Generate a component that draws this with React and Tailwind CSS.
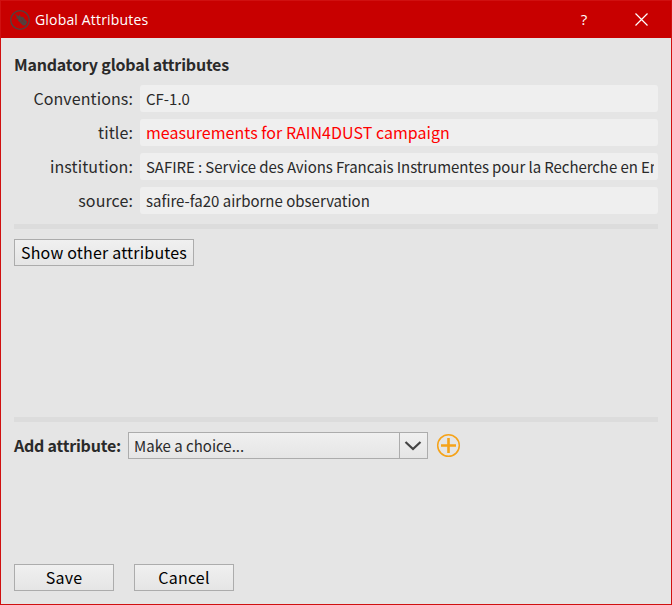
const fields = [
  { label: 'Conventions:', value: 'CF-1.0', style: 'text-[15px] text-[#2a2a2a]' },
  { label: 'title:', value: 'measurements for RAIN4DUST campaign', style: 'text-[16px] tracking-[0.03px] text-[#ff0000]' },
  {
    label: 'institution:',
    value: 'SAFIRE : Service des Avions Francais Instrumentes pour la Recherche en En',
    style: 'text-[15px] tracking-[-0.07px] text-[#2a2a2a]',
  },
  { label: 'source:', value: 'safire-fa20 airborne observation', style: 'text-[15px] text-[#2a2a2a]' },
];

const buttonStyle =
  'flex h-[27px] items-center justify-center whitespace-nowrap border border-[#acacac] bg-linear-to-b from-[#f0f0f0] to-[#e5e5e5] text-[16px] tracking-[0.2px] leading-[25px] text-black';

function AppIcon() {
  return (
    <svg width="22" height="22" viewBox="0 0 22 22" fill="none">
      <circle cx="11" cy="11" r="9.3" stroke="#50423f" strokeWidth="1.3" />
      <path d="M5.5 4.5 9.6 7.2l1.2-1.8 1 2.6 2-.2 4.4 5.2-1.6 3.2-2.6.4-5-5.2.3-1.8-2.8.2 1.6-1.6z" fill="#50423f" />
      <path d="m12 10 3.5 4M14.5 10.5l-3 3.5" stroke="#7d2522" strokeWidth=".5" />
    </svg>
  );
}

function Divider() {
  return <div className="h-[5px] w-[644px] shrink-0 bg-[#dcdcdc]" />;
}

export default function App() {
  return (
    <div className="flex h-[605px] w-[672px] flex-col overflow-hidden border border-[#d01010] bg-[#e5e5e5] font-['Noto_Sans_CJK_SC',sans-serif] text-[#2a2a2a]">
      <header className="flex h-[37px] shrink-0 items-center bg-[#c80000] pl-2 text-white">
        <AppIcon />
        <span className="ml-1 font-['Open_Sans',sans-serif] text-[14px] leading-5 tracking-[0.17px]">Global Attributes</span>
        <span className="mb-[2px] ml-auto w-4 text-center font-['Open_Sans',sans-serif] text-[15px] leading-5">?</span>
        <svg className="mr-[22px] mb-px ml-[42px]" width="15" height="15" viewBox="0 0 15 15">
          <path d="m1.5 1.5 12 12m0-12-12 12" stroke="white" strokeWidth="1.2" />
        </svg>
      </header>

      <main className="flex flex-1 flex-col pl-[13px]">
        <h1 className="mt-[13px] h-[26px] whitespace-nowrap text-[16px] leading-[26px] font-bold tracking-[-0.2px]">
          Mandatory global attributes
        </h1>
        <div className="mt-[8px] flex flex-col gap-[7px]">
          {fields.map((f) => (
            <div key={f.label} className="flex h-[27px]">
              <div className="w-[119px] text-right text-[16px] leading-[27px] tracking-[0.1px]">{f.label}</div>
              <div className="ml-[7px] w-[518px] rounded-[3px] bg-[#efefef] pr-1 pl-[6px]">
                <div className={`overflow-hidden whitespace-nowrap leading-[27px] ${f.style}`}>{f.value}</div>
              </div>
            </div>
          ))}
        </div>
        <div className="mt-[10px] flex flex-col">
          <Divider />
        </div>
        <button className={`mt-[10px] w-[180px] ${buttonStyle}`}>Show other attributes</button>
        <div className="mt-[151px] flex flex-col">
          <Divider />
        </div>
        <div className="mt-[10px] flex h-[27px] items-center">
          <div className="w-[114px] whitespace-nowrap text-[16px] leading-[27px] font-bold tracking-[-0.22px]">Add attribute:</div>
          <div className="flex h-[27px] w-[300px] border border-[#acacac] bg-linear-to-b from-[#f0f0f0] to-[#e5e5e5]">
            <div className="flex-1 pl-[5px] text-[15px] leading-[26px]">Make a choice...</div>
            <div className="flex w-[28px] items-center justify-center border-l border-[#acacac]">
              <svg className="mr-[2px]" width="18" height="12" viewBox="0 0 18 12" fill="none">
                <path d="m1.5 2 7.5 7 7.5-7" stroke="#444" strokeWidth="2.2" />
              </svg>
            </div>
          </div>
          <svg className="ml-[8px]" width="25" height="25" viewBox="0 0 25 25" fill="none">
            <circle cx="12.5" cy="12.5" r="10.8" stroke="#f5a31a" strokeWidth="1.5" />
            <path d="M12.5 5v15M5 12.5h15" stroke="#f5a31a" strokeWidth="2.6" />
          </svg>
        </div>
        <div className="mt-[105px] flex gap-5">
          <button className={`w-[100px] ${buttonStyle}`}>Save</button>
          <button className={`w-[100px] ${buttonStyle}`}>Cancel</button>
        </div>
      </main>
    </div>
  );
}
